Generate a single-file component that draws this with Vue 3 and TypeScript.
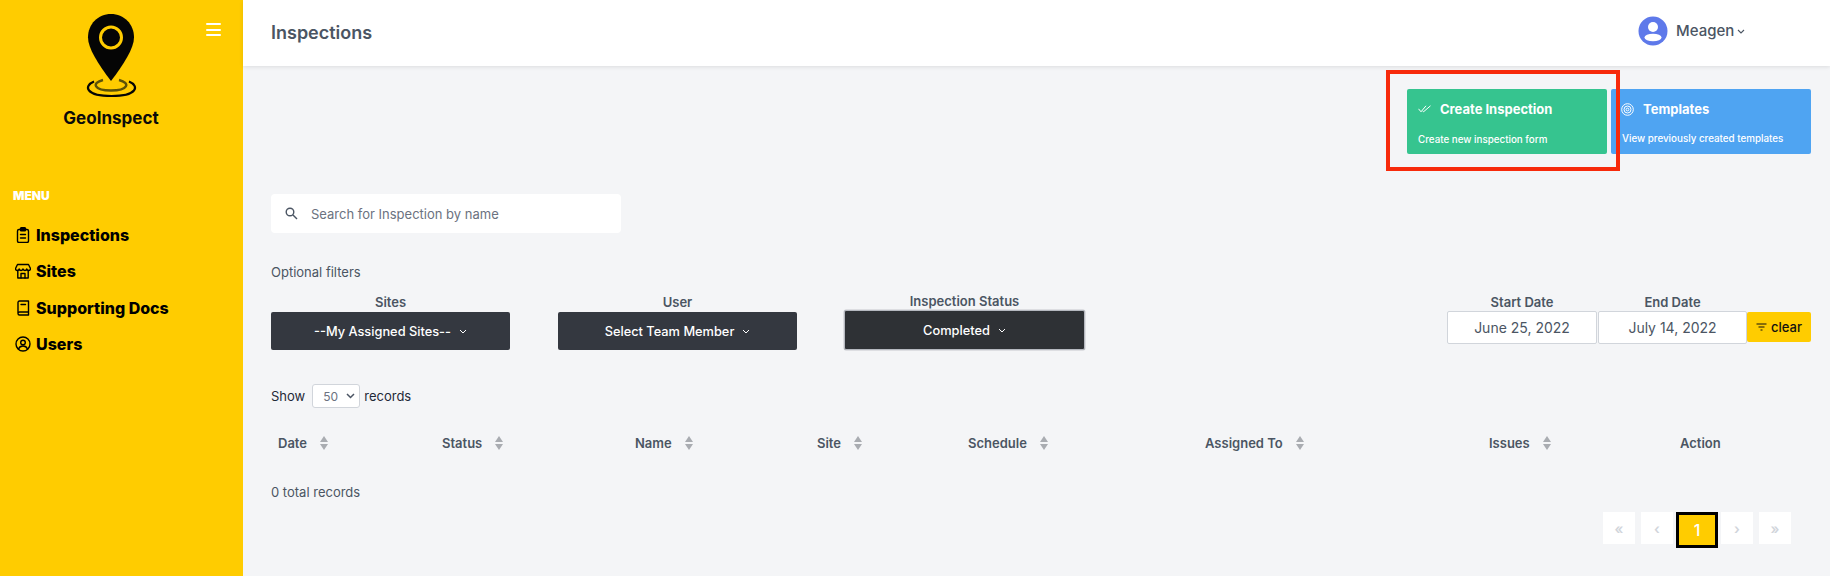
<script setup lang="ts">
const menu = [
  { label: 'Inspections', icon: 'clip' },
  { label: 'Sites', icon: 'store' },
  { label: 'Supporting Docs', icon: 'book' },
  { label: 'Users', icon: 'user' },
]
const cols = [
  { label: 'Date', w: 164, sort: true },
  { label: 'Status', w: 193, sort: true },
  { label: 'Name', w: 182, sort: true },
  { label: 'Site', w: 151, sort: true },
  { label: 'Schedule', w: 237, sort: true },
  { label: 'Assigned To', w: 284, sort: true },
  { label: 'Issues', w: 191, sort: true },
  { label: 'Action', w: 100, sort: false },
]
</script>

<template>
  <div class="app">
    <aside class="side">
      <div class="brand">
        <svg class="pin" width="54" height="84" viewBox="0 0 54 84">
          <path d="M27 0C14 0 4 10 4 23.500 4 34 14 50 27 67 40 50 50 34 50 23.500 50 10 40 0 27 0Z" fill="#050505" />
          <circle cx="27" cy="23.500" r="10.500" fill="none" stroke="#ffcc00" stroke-width="3" />
          <path d="M10 67.500C-1 72 2 82 27.500 82 53 82 56 72 45 67.500" fill="none" stroke="#050505" stroke-width="2.200" />
          <path d="M19 66C7 69 10 76.500 27 76.500 44 76.500 47 69 35 66" fill="none" stroke="#5c5208" stroke-width="2.400" />
        </svg>
        <div class="brand-name">GeoInspect</div>
        <div class="burger"><i></i><i></i><i></i></div>
      </div>
      <div class="menu-title">MENU</div>
      <nav class="nav">
        <a v-for="m in menu" :key="m.label" class="nav-item">
          <svg width="16" height="16" viewBox="0 0 16 16" fill="none" stroke="#000" stroke-width="1.400" stroke-linejoin="round" stroke-linecap="round">
            <template v-if="m.icon === 'clip'">
              <rect x="2.500" y="2.500" width="11" height="13" rx="1.500" />
              <rect x="5.500" y=".8" width="5" height="3" rx=".8" fill="#000" />
              <path d="M5.500 7.500h5M5.500 11h5" />
            </template>
            <template v-else-if="m.icon === 'store'">
              <path d="M2.800 7.500V15h10.400V7.500" />
              <path d="M2.500 1.500h11l2 4c0 2.500-3 2.500-3.700.5-.6 2-3 2-3.800 0-.8 2-3.200 2-3.800 0-.7 2-3.700 2-3.700-.5l2-4Z" />
              <path d="M6 15v-4.500h4V15" />
            </template>
            <template v-else-if="m.icon === 'book'">
              <path d="M3 13V2.500A1.500 1.500 0 0 1 4.500 1h9v14h-9A1.500 1.500 0 0 1 3 13.500 1.500 1.500 0 0 1 4.500 12h9" />
              <path d="M6 4.500h4.500" />
            </template>
            <template v-else>
              <circle cx="8" cy="8" r="7" />
              <circle cx="8" cy="6.500" r="2.300" />
              <path d="M3.500 13c1-2.500 2.500-3 4.500-3s3.500.5 4.500 3" />
            </template>
          </svg>
          <span>{{ m.label }}</span>
        </a>
      </nav>
    </aside>

    <div class="main">
      <header class="top">
        <h1>Inspections</h1>
        <div class="account">
          <svg width="30" height="30" viewBox="0 0 30 30">
            <circle cx="15" cy="15" r="14.500" fill="#5e79ea" />
            <circle cx="15" cy="11" r="5" fill="#fff" />
            <ellipse cx="15" cy="21.500" rx="8.500" ry="3.800" fill="#fff" />
          </svg>
          <span class="who">Meagen</span>
          <svg class="chev" width="8" height="5" viewBox="0 0 8 5" fill="none" stroke="#4b5563" stroke-width="1.100"><path d="M1 1l3 3 3-3" /></svg>
        </div>
      </header>

      <section class="content">
        <div class="cards">
          <div class="card green">
            <div class="card-title">
              <svg width="13" height="8" viewBox="0 0 13 8" fill="none" stroke="#fff" stroke-width="1"><path d="M.5 3.800 3 6.800 8 .8M4.500 5.800l1 1L12.500.8" /></svg>
              <span>Create Inspection</span>
            </div>
            <div class="card-sub low">Create new inspection form</div>
          </div>
          <div class="card blue">
            <div class="card-title">
              <svg width="13" height="13" viewBox="0 0 13 13" fill="none" stroke="#fff" stroke-width="1"><circle cx="6.500" cy="6.500" r="5.800" /><circle cx="6.500" cy="6.500" r="3.500" /><circle cx="6.500" cy="6.500" r="1.400" /></svg>
              <span>Templates</span>
            </div>
            <div class="card-sub">View previously created templates</div>
          </div>
          <div class="annot"></div>
        </div>

        <div class="search">
          <svg width="13" height="13" viewBox="0 0 13 13" fill="none" stroke="#4b5563" stroke-width="1.400"><circle cx="5" cy="5" r="3.800" /><path d="m8 8 4 4" /></svg>
          <span>Search for Inspection by name</span>
        </div>

        <div class="opt">Optional filters</div>

        <div class="filters">
          <div class="f f-sites">
            <label>Sites</label>
            <button class="dd"><span>--My Assigned Sites--</span><svg width="8" height="5" viewBox="0 0 8 5" fill="none" stroke="#fff" stroke-width="1"><path d="M1 1l3 3 3-3" /></svg></button>
          </div>
          <div class="f f-user">
            <label>User</label>
            <button class="dd"><span>Select Team Member</span><svg width="8" height="5" viewBox="0 0 8 5" fill="none" stroke="#fff" stroke-width="1"><path d="M1 1l3 3 3-3" /></svg></button>
          </div>
          <div class="f f-status">
            <label>Inspection Status</label>
            <button class="dd focus"><span>Completed</span><svg width="8" height="5" viewBox="0 0 8 5" fill="none" stroke="#fff" stroke-width="1"><path d="M1 1l3 3 3-3" /></svg></button>
          </div>
          <div class="dates">
            <div class="f date">
              <label>Start Date</label>
              <div class="date-in">June 25, 2022</div>
            </div>
            <div class="f date">
              <label>End Date</label>
              <div class="date-in">July 14, 2022</div>
            </div>
            <button class="clear">
              <svg width="11" height="8" viewBox="0 0 11 8" fill="none" stroke="#111" stroke-width="1"><path d="M.5 1h10M2.500 4h6M4.500 7h2" /></svg>
              <span>clear</span>
            </button>
          </div>
        </div>

        <div class="show">
          <span class="dark">Show</span>
          <div class="sel">
            <span>50</span>
            <svg width="9" height="6" viewBox="0 0 9 6" fill="none" stroke="#4b5563" stroke-width="1.500"><path d="M1 1l3.500 3.500L8 1" /></svg>
          </div>
          <span class="dark rec">records</span>
        </div>

        <div class="thead">
          <div v-for="c in cols" :key="c.label" class="th" :style="{ width: c.w + 'px' }">
            <span>{{ c.label }}</span>
            <svg v-if="c.sort" width="8" height="14" viewBox="0 0 8 14" fill="#a9acb1"><path d="M4 0l4 6H0zM4 14 0 8h8z" /></svg>
          </div>
        </div>

        <div class="total">0 total records</div>

        <div class="pager">
          <div class="pg">«</div>
          <div class="pg">‹</div>
          <div class="pg active">1</div>
          <div class="pg">›</div>
          <div class="pg">»</div>
        </div>
      </section>
    </div>
  </div>
</template>

<style>
html, body { margin: 0; padding: 0; }
</style>

<style scoped>
* { box-sizing: border-box; }
.app {
  display: flex;
  width: 1830px;
  height: 576px;
  overflow: hidden;
  background: #f4f5f7;
  font-family: Inter, "Liberation Sans", sans-serif;
  color: #4b5563;
}
.side {
  width: 243px;
  flex: none;
  height: 100%;
  background: #ffcc00;
}
.brand {
  position: relative;
  display: flex;
  flex-direction: column;
  align-items: center;
  width: 222px;
  padding-top: 14px;
  height: 189px;
}
.pin { display: block; }
.brand-name {
  margin-top: 10px;
  font-weight: 700;
  font-size: 17px;
  color: #0a0a0a;
  line-height: 20px;
}
.burger {
  position: absolute;
  top: 23px;
  left: 206px;
  width: 15px;
  height: 13px;
  display: flex;
  flex-direction: column;
  justify-content: space-between;
}
.burger i {
  display: block;
  height: 2px;
  background: #fff;
  border-radius: 1px;
}
.menu-title {
  padding-left: 13px;
  font-size: 12px;
  font-weight: 900;
  color: #fff;
  line-height: 14px;
  margin-bottom: 19px;
}
.nav { display: flex; flex-direction: column; gap: 11.500px; padding-left: 15px; }
.nav-item {
  display: flex;
  align-items: center;
  gap: 5px;
  height: 25px;
  font-size: 16px;
  font-weight: 800;
  color: #000;
  white-space: nowrap;
}
.main { flex: 1; min-width: 0; display: flex; flex-direction: column; }
.top {
  height: 66px;
  background: #fff;
  box-shadow: 0 1px 4px rgba(0, 0, 0, .1);
  display: flex;
  align-items: center;
  justify-content: space-between;
  padding: 0 0 2px 28px;
  flex: none;
  position: relative;
}
.top h1 {
  margin: 0;
  font-size: 18px;
  font-weight: 600;
  color: #4b5563;
}
.account {
  display: flex;
  align-items: center;
  width: 192px;
  margin-top: -3px;
}
.who { margin-left: 8px; font-size: 15px; font-weight: 500; color: #4b5563; }
.chev { margin-left: 3px; margin-top: 1px; }
.content { padding: 23px 19px 0 28px; flex: 1; }
.cards {
  position: relative;
  display: flex;
  justify-content: flex-end;
  gap: 4px;
}
.card {
  width: 200px;
  height: 65px;
  border-radius: 2px;
  color: #fff;
  padding: 12px 11px 0;
}
.green { background: #36c48f; }
.blue { background: #4fa4f2; }
.card-title {
  display: flex;
  align-items: center;
  gap: 9px;
  font-size: 13px;
  font-weight: 700;
  line-height: 16px;
}
.card-title svg { flex: none; width: 13px; }
.card-sub { margin-top: 15px; font-size: 9.800px; font-weight: 500; line-height: 14px; white-space: nowrap; }
.card-sub.low { margin-top: 16px; }
.blue .card-title svg { margin-left: -1px; }
.annot {
  position: absolute;
  left: 1115px;
  top: -19px;
  width: 234px;
  height: 101px;
  border: 4px solid #f72a0b;
}
.search {
  margin-top: 40px;
  width: 350px;
  height: 39px;
  background: #fff;
  border-radius: 4px;
  display: flex;
  align-items: center;
  gap: 13px;
  padding-left: 14px;
  font-size: 13px;
  color: #6b7280;
}
.opt { margin-top: 31px; font-size: 13px; line-height: 16px; color: #4b5563; }
.filters { display: flex; align-items: flex-end; margin-top: 15px; height: 66px; }
.f { display: flex; flex-direction: column; align-items: stretch; }
.f label {
  text-align: center;
  font-size: 13px;
  font-weight: 600;
  line-height: 16px;
  color: #4b5563;
  margin-bottom: 2px;
}
.f-sites { width: 239px; margin-bottom: 11px; }
.f-user { width: 239px; margin-left: 48px; margin-bottom: 11px; }
.f-status { width: 241px; margin-left: 47px; margin-bottom: 11px; }
.f-status label { margin-bottom: 1px; }
.dd {
  height: 38px;
  border: 0;
  border-radius: 2px;
  background: #343840;
  color: #fff;
  font: 500 12.800px Inter, sans-serif;
  display: flex;
  align-items: center;
  justify-content: center;
  gap: 8px;
}
.dd.focus {
  height: 40px;
  background: #2e3135;
  border: 1px solid #b5b8bf;
  box-shadow: 0 0 0 .5px #c6c8cd;
}
.dates { margin-left: auto; display: flex; align-items: flex-end; margin-bottom: 17px; }
.date { width: 150px; }
.date + .date { margin-left: 1px; width: 149px; }
.date label { margin-bottom: 1px; }
.date-in {
  height: 33px;
  border: 1px solid #d1d5db;
  border-radius: 2px;
  background: #fff;
  text-align: center;
  font-size: 14px;
  line-height: 31px;
  color: #4b5563;
}
.clear {
  width: 64px;
  height: 30px;
  margin-bottom: 2px;
  border: 0;
  border-radius: 2px;
  background: #ffcc00;
  color: #111;
  font: 500 13px Inter, sans-serif;
  display: flex;
  align-items: center;
  justify-content: center;
  gap: 4px;
}
.show {
  margin-top: 23px;
  display: flex;
  align-items: center;
  gap: 5px;
  height: 24px;
  font-size: 13px;
}
.dark { color: #1f2937; }
.rec { margin-left: -1px; }
.sel {
  width: 48px;
  height: 24px;
  margin-left: 2px;
  border: 1px solid #d1d5db;
  border-radius: 3px;
  background: #fff;
  display: flex;
  align-items: center;
  justify-content: space-between;
  padding: 0 4px 0 10px;
  font-size: 12px;
  color: #6b7280;
}
.thead {
  display: flex;
  align-items: center;
  margin-top: 23px;
  height: 24px;
  padding-left: 7px;
}
.th {
  flex: none;
  display: flex;
  align-items: center;
  gap: 13px;
  font-size: 13px;
  font-weight: 600;
  color: #4b5563;
  white-space: nowrap;
}
.total { margin-top: 29px; font-size: 13px; line-height: 16px; color: #4b5563; }
.pager {
  margin-top: 12px;
  display: flex;
  justify-content: flex-end;
  align-items: flex-start;
  padding-right: 20px;
}
.pg {
  width: 32px;
  height: 32px;
  background: #fff;
  color: #d1d5db;
  display: flex;
  align-items: center;
  justify-content: center;
  font-size: 14px;
  font-weight: 600;
  margin-left: 6px;
}
.pg.active {
  width: 42px;
  height: 36px;
  margin: 0 -3px 0 3px;
  background: #ffcc00;
  border: 3px solid #000;
  color: #fff;
  font-size: 16px;
  font-weight: 500;
}
.pg.active + .pg { margin-left: 6px; }
</style>
